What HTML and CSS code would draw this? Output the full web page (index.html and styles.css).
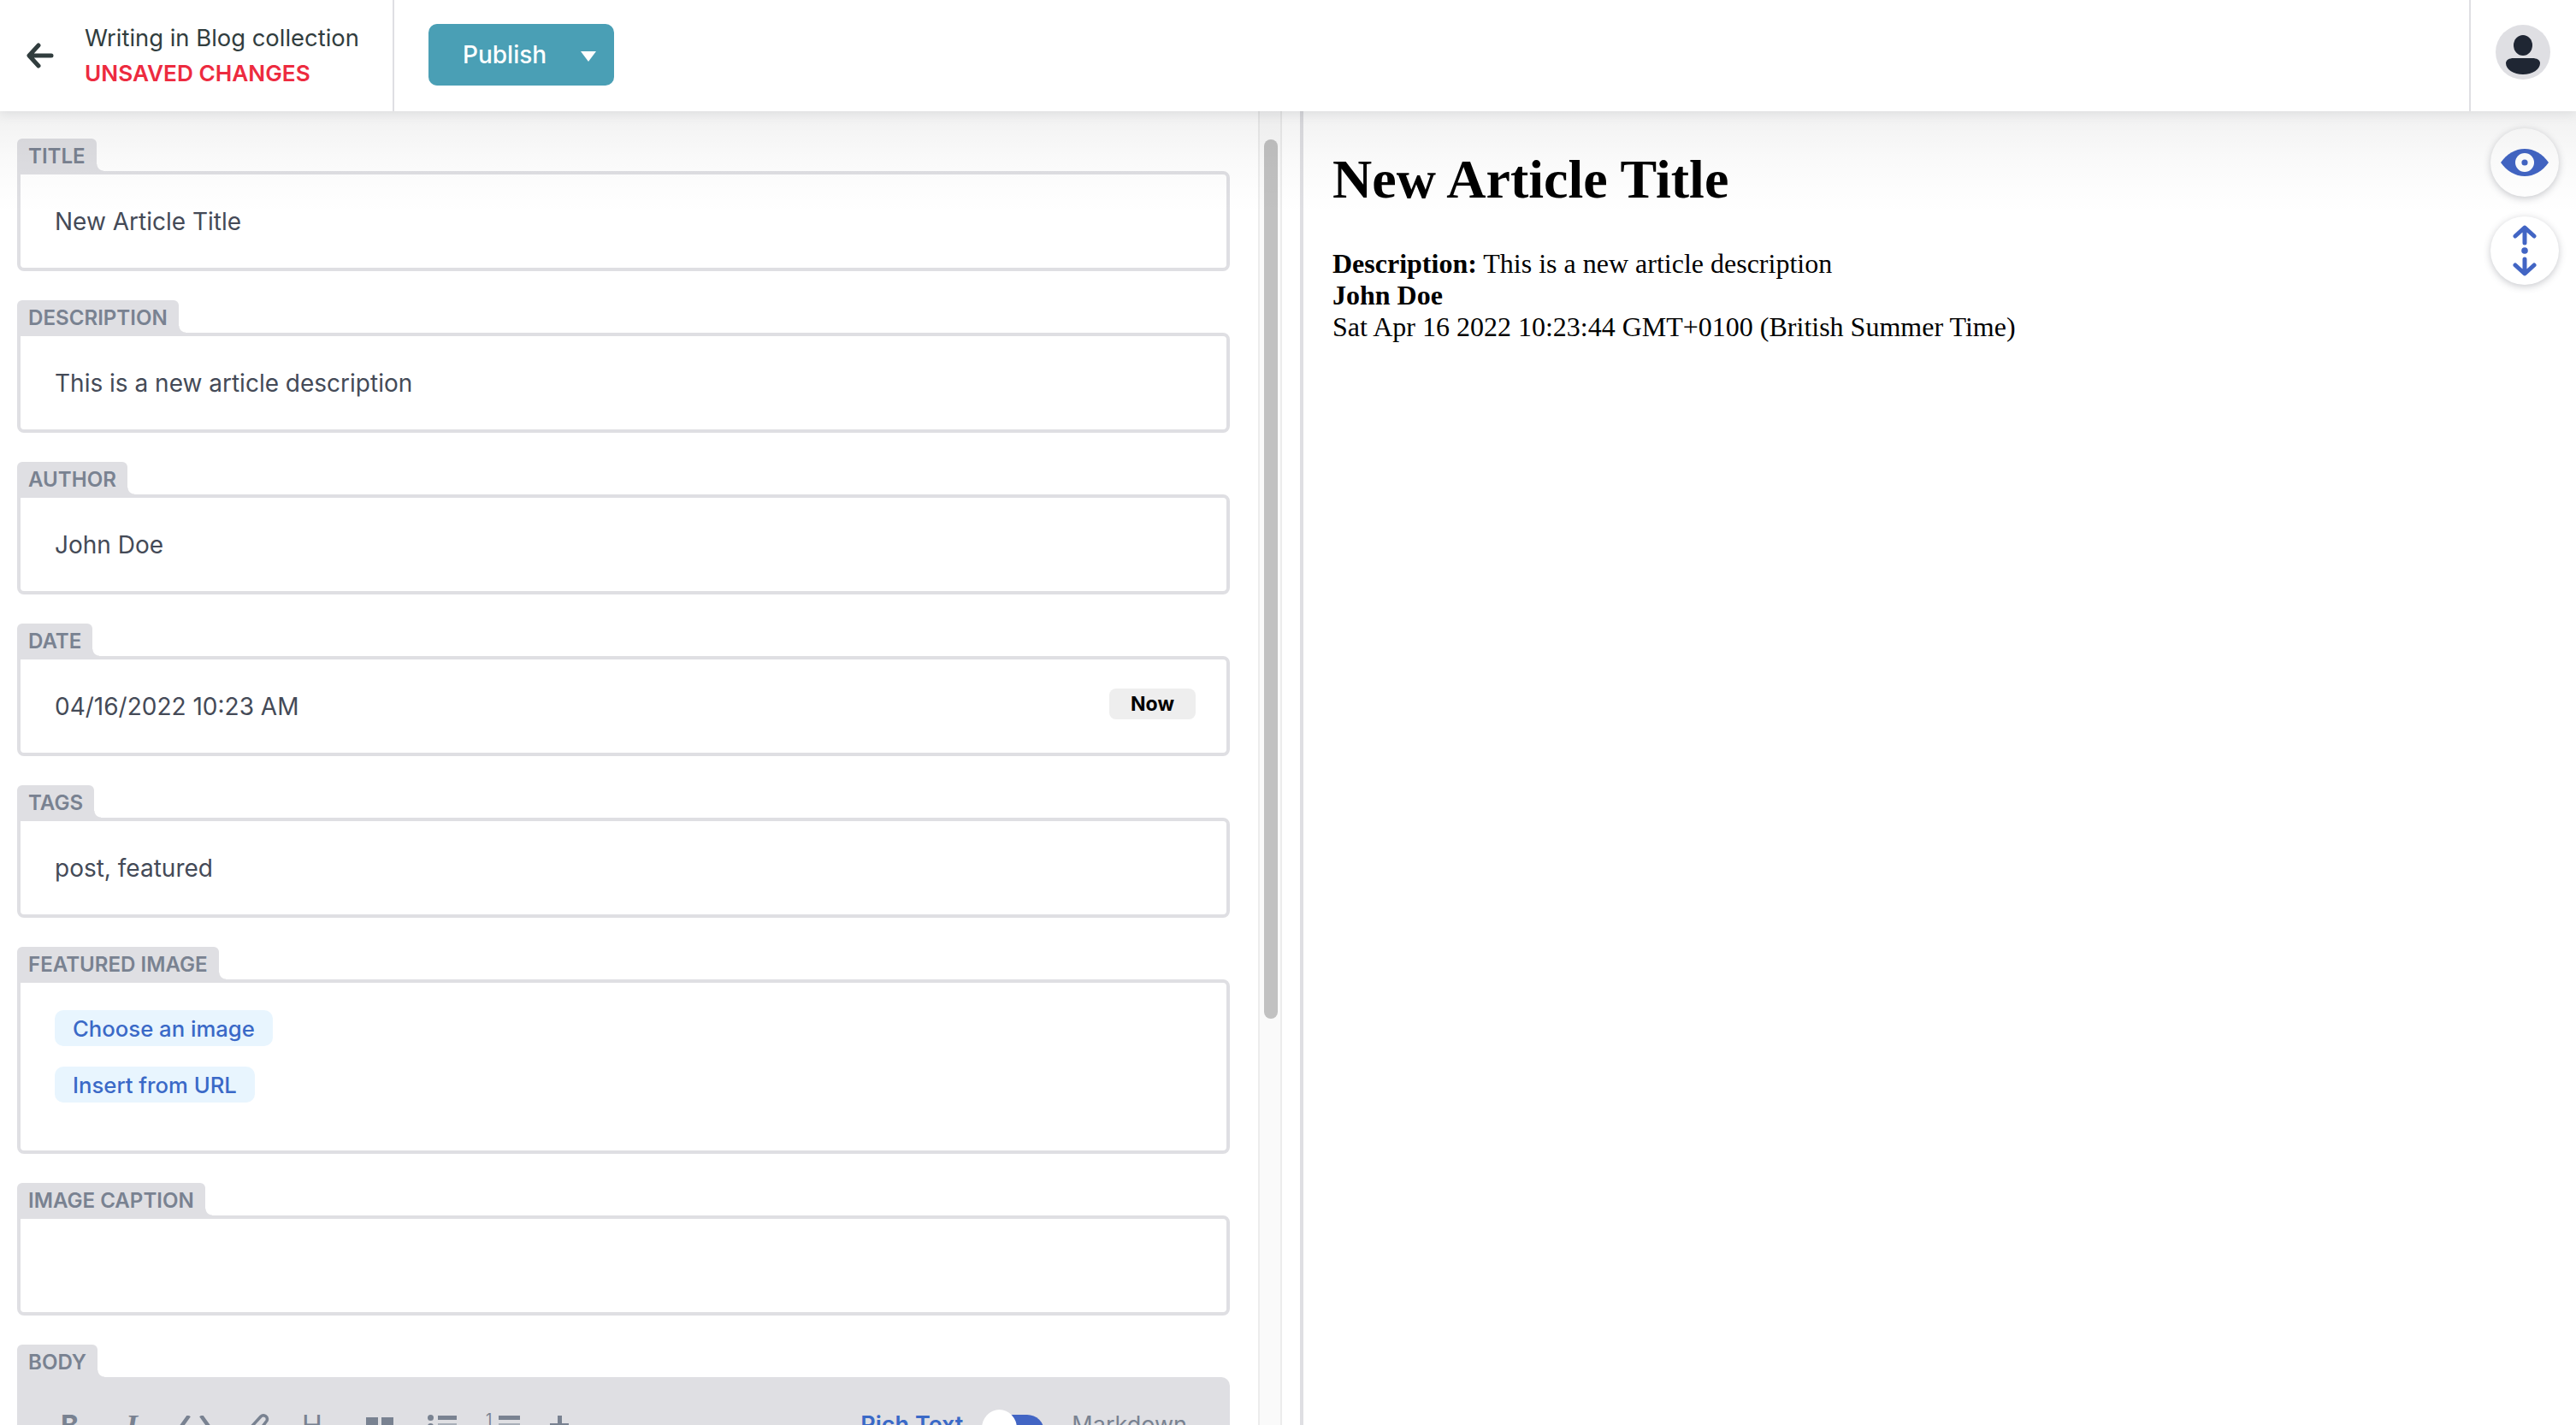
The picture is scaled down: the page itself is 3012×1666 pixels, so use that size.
FILE: index.html
```html
<!DOCTYPE html>
<html lang="en">
  <head>
    <meta charset="utf-8">
    <title>Writing in Blog collection</title>
    <link rel="stylesheet" href="styles.css">
  </head>
  <body>
    <header class="topbar">
      <div class="back">
        <svg class="back-arrow" viewBox="0 0 32 40"><path d="M14 8 3 20l11 12M4 20h25" fill="none" stroke="#313d3e" stroke-width="5" stroke-linecap="round" stroke-linejoin="round"/></svg>
        <div class="back-text">
          <div class="back-title">Writing in Blog collection</div>
          <div class="back-status">UNSAVED CHANGES</div>
        </div>
      </div>
      <div class="actions">
        <button class="publish">Publish<span class="caret"></span></button>
      </div>
      <div class="account">
        <svg class="avatar" viewBox="0 0 64 64">
          <circle cx="32" cy="32" r="32" fill="#dfdfe3"/>
          <ellipse cx="32" cy="24" rx="11" ry="12" fill="#1f2633"/>
          <path d="M12 45c0-4 4-6 9-6h22c5 0 9 2 9 6 0 7-9 13-20 13s-20-6-20-13z" fill="#1f2633"/>
        </svg>
      </div>
    </header>

    <main class="editor">
      <section class="form-pane">
        <div class="form">
          <div class="field">
            <label class="field-label">Title</label>
            <div class="field-box">New Article Title</div>
          </div>
          <div class="field">
            <label class="field-label">Description</label>
            <div class="field-box">This is a new article description</div>
          </div>
          <div class="field">
            <label class="field-label">Author</label>
            <div class="field-box">John Doe</div>
          </div>
          <div class="field">
            <label class="field-label">Date</label>
            <div class="field-box date-box">04/16/2022 10:23 AM<button class="now">Now</button></div>
          </div>
          <div class="field">
            <label class="field-label">Tags</label>
            <div class="field-box">post, featured</div>
          </div>
          <div class="field">
            <label class="field-label">Featured Image</label>
            <div class="field-box image-box">
              <button class="light-btn">Choose an image</button>
              <button class="light-btn">Insert from URL</button>
            </div>
          </div>
          <div class="field">
            <label class="field-label">Image Caption</label>
            <div class="field-box"></div>
          </div>
          <div class="field">
            <label class="field-label">Body</label>
            <div class="toolbar">
              <div class="tools">
                <span class="tool-b">B</span>
                <span class="tool-i">I</span>
                <svg class="tool-code" viewBox="0 0 36 24"><path d="M11 0 1 14M25 0l10 14" fill="none" stroke="#798291" stroke-width="4.5"/></svg>
                <svg class="tool-link" viewBox="0 0 24 24"><path d="M2 16 13 4c3-3 9 0 7 5l-6 8" fill="none" stroke="#798291" stroke-width="3.5"/></svg>
                <span class="tool-h">H</span>
                <span class="tool-q"><i></i><i></i></span>
                <span class="tool-ul"><i></i><b></b></span>
                <span class="tool-ol">1<b></b></span>
                <span class="tool-plus"></span>
              </div>
              <div class="mode">
                <span class="mode-on">Rich Text</span>
                <span class="switch"><span class="knob"></span></span>
                <span class="mode-off">Markdown</span>
              </div>
            </div>
          </div>
        </div>
        <div class="scroll-track"><div class="scroll-thumb"></div></div>
      </section>

      <section class="preview">
        <h1>New Article Title</h1>
        <p><strong>Description:</strong> This is a new article description<br>
        <strong>John Doe</strong><br>
        Sat Apr 16 2022 10:23:44 GMT+0100 (British Summer Time)</p>
        <div class="float-btns">
          <button class="round-btn">
            <svg viewBox="0 0 56 32" class="eye"><path d="M0 16C7 6 17 0 28 0s21 6 28 16c-7 10-17 16-28 16S7 26 0 16z" fill="#4265c4"/><circle cx="28" cy="16" r="11" fill="#fff"/><circle cx="28" cy="16" r="3.6" fill="#4265c4"/></svg>
          </button>
          <button class="round-btn">
            <svg viewBox="0 0 28 60" class="sync"><g fill="none" stroke="#4265c4" stroke-width="5" stroke-linecap="round" stroke-linejoin="round"><path d="M3 13 14 3l11 10M14 4v17M3 47l11 10 11-10M14 56V40"/></g><circle cx="14" cy="30" r="3.8" fill="#4265c4"/></svg>
          </button>
        </div>
      </section>
    </main>
  </body>
</html>
```

FILE: styles.css
```css
* {
  box-sizing: border-box;
}
html, body {
  margin: 0;
  height: 100%;
}
body {
  width: 3012px;
  height: 1666px;
  overflow: hidden;
  display: flex;
  flex-direction: column;
  background: #fff;
  font-family: Inter, "Liberation Sans", sans-serif;
  color: #313d3e;
}
button {
  font-family: inherit;
  border: 0;
  padding: 0;
}

/* top bar */
.topbar {
  height: 130px;
  flex: none;
  display: flex;
  background: #fff;
  position: relative;
  z-index: 2;
  box-shadow: 0 4px 12px rgba(68, 74, 87, 0.1);
}
.back {
  width: 461px;
  display: flex;
  align-items: center;
  padding-left: 31px;
  border-right: 2px solid #dfdfe3;
}
.back-arrow {
  width: 32px;
  height: 40px;
  margin-right: 36px;
}
.back-title {
  font-size: 27.4px;
  line-height: 34px;
  margin-top: -2px;
  color: #313d3e;
}
.back-status {
  margin-top: 10px;
  font-size: 26.2px;
  line-height: 30px;
  font-weight: 600;
  color: #ed2b3f;
}
.actions {
  flex: 1;
  padding: 28px 0 0 40px;
}
.publish {
  width: 217px;
  height: 72px;
  border-radius: 10px;
  background: #4a9fb5;
  color: #fff;
  font-size: 28px;
  font-weight: 500;
  display: flex;
  align-items: center;
  padding-left: 40px;
}
.caret {
  margin-left: 40px;
  margin-top: 4px;
  border-left: 9px solid transparent;
  border-right: 9px solid transparent;
  border-top: 12px solid #fff;
}
.account {
  width: 125px;
  border-left: 2px solid #dfdfe3;
  display: flex;
  padding: 29px 0 0 29px;
}
.avatar {
  width: 64px;
  height: 64px;
}

/* form side */
.editor {
  flex: 1;
  display: flex;
  min-height: 0;
  position: relative;
}
/* shadow of the top bar, falls over both panes */
.editor::before {
  content: "";
  position: absolute;
  left: 0;
  right: 0;
  top: 0;
  height: 120px;
  z-index: 1;
  pointer-events: none;
  background: linear-gradient(rgba(0, 0, 0, 0.055), rgba(0, 0, 0, 0.02) 60px, transparent);
}
.form-pane {
  width: 1524px;
  flex: none;
  display: flex;
  border-right: 4px solid #dfdfe3;
  overflow: hidden;
}
.form {
  width: 1471px;
  flex: none;
  padding: 32px 33px 0 20px;
}
.field {
  margin-bottom: 34px;
}
.field-label {
  display: block;
  position: relative;
  width: fit-content;
  height: 38px;
  padding: 6px 13px 0;
  border-radius: 6px 6px 0 0;
  background: #dfdfe3;
  color: #798291;
  font-size: 24.1px;
  line-height: 30px;
  font-weight: 600;
  text-transform: uppercase;
}
.field-label::after {
  content: "";
  position: absolute;
  left: 100%;
  bottom: 0;
  width: 8px;
  height: 8px;
  background: radial-gradient(circle at 100% 0, transparent 7px, #dfdfe3 8px);
}
.field-box {
  height: 117px;
  padding: 0 40px;
  display: flex;
  align-items: center;
  background: #fff;
  border: 4px solid #dfdfe3;
  border-radius: 0 8px 8px 8px;
  font-size: 28px;
  color: #444a57;
}
.date-box {
  justify-content: space-between;
  padding-right: 36px;
}
.now {
  width: 101px;
  height: 36px;
  margin-top: -5px;
  border-radius: 8px;
  background: #eee;
  color: #000;
  font-size: 23px;
  font-weight: 700;
}
.image-box {
  height: 204px;
  flex-direction: column;
  align-items: flex-start;
  justify-content: flex-start;
  gap: 24px;
  padding-top: 32px;
}
.light-btn {
  height: 42px;
  padding: 0 21px;
  border-radius: 10px;
  background: #e8f5fe;
  color: #3a69c7;
  font-size: 25.7px;
  font-weight: 500;
}

/* body toolbar, cut off by the window */
.toolbar {
  height: 120px;
  display: flex;
  justify-content: space-between;
  padding: 38px 50px 0 53px;
  background: #dfdfe3;
  border-radius: 0 10px 0 0;
}
.tools {
  position: relative;
  color: #798291;
}
.tools > * {
  position: absolute;
  top: 7px;
}
.tool-b, .tool-h {
  font-size: 32px;
  line-height: 32px;
  font-weight: 700;
}
.tool-b { left: -2px; top: 3px; }
.tool-i {
  left: 74px;
  top: 1px;
  font-family: "Liberation Serif", serif;
  font-style: italic;
  font-weight: 700;
  font-size: 36px;
  line-height: 36px;
}
.tool-code { left: 137px; width: 36px; height: 24px; }
.tool-link { left: 219px; width: 24px; height: 24px; top: 4px; }
.tool-h { left: 280px; top: 3px; font-weight: 400; }
.tool-q { left: 355px; top: 9px; display: flex; gap: 4px; }
.tool-q i { width: 14px; height: 16px; background: #798291; }
.tool-ul { left: 427px; top: 6px; width: 36px; height: 20px; }
.tool-ul i { position: absolute; left: 0; top: 0; width: 7px; height: 7px; border-radius: 50%; background: #798291; box-shadow: 0 10px 0 #798291; }
.tool-ul b { position: absolute; left: 12px; top: 1px; width: 22px; height: 5px; background: #798291; box-shadow: 0 9px 0 #a9afb9; }
.tool-ol { left: 495px; top: 3px; width: 42px; font-size: 18px; line-height: 18px; }
.tool-ol b { position: absolute; left: 15px; top: 4px; width: 25px; height: 5px; background: #798291; box-shadow: 0 9px 0 #a9afb9; }
.tool-plus {
  left: 570px;
  width: 22px;
  height: 22px;
  background: linear-gradient(#798291, #798291) center / 5px 100% no-repeat, linear-gradient(#798291, #798291) center / 100% 5px no-repeat;
}
.mode {
  display: flex;
  align-items: flex-start;
  font-size: 27px;
  line-height: 36px;
  color: #798291;
}
.mode-on {
  color: #3a69c7;
  font-weight: 600;
}
.switch {
  display: block;
  position: relative;
  width: 73px;
  height: 40px;
  margin: 6px 32px 0 22px;
  border-radius: 20px;
  background: #4265c4;
}
.knob {
  position: absolute;
  left: 0;
  top: -6px;
  width: 41px;
  height: 44px;
  border-radius: 50%;
  background: #fff;
}

/* scrollbar */
.scroll-track {
  width: 28px;
  flex: none;
  background: #fafafa;
  border-left: 2px solid #ececec;
  border-right: 2px solid #ececec;
  padding: 33px 3px 0 5px;
}
.scroll-thumb {
  height: 1028px;
  border-radius: 8px;
  background: #c1c1c1;
}

/* preview side */
.preview {
  flex: 1;
  position: relative;
  padding: 0 0 0 34px;
  color: #000;
  font-family: "Liberation Serif", serif;
  font-size: 32px;
}
.preview h1 {
  margin: 43px 0 43px;
  font-size: 64px;
}
.preview p {
  margin: 0;
}
.float-btns {
  position: absolute;
  right: 20px;
  top: 20px;
  display: flex;
  flex-direction: column;
  gap: 23px;
}
.round-btn {
  width: 80px;
  height: 80px;
  display: flex;
  align-items: center;
  justify-content: center;
  border-radius: 50%;
  background: #fff;
  box-shadow: 0 2px 8px rgba(68, 74, 87, 0.3);
}
.eye {
  width: 56px;
  height: 32px;
}
.sync {
  width: 28px;
  height: 60px;
}
```
